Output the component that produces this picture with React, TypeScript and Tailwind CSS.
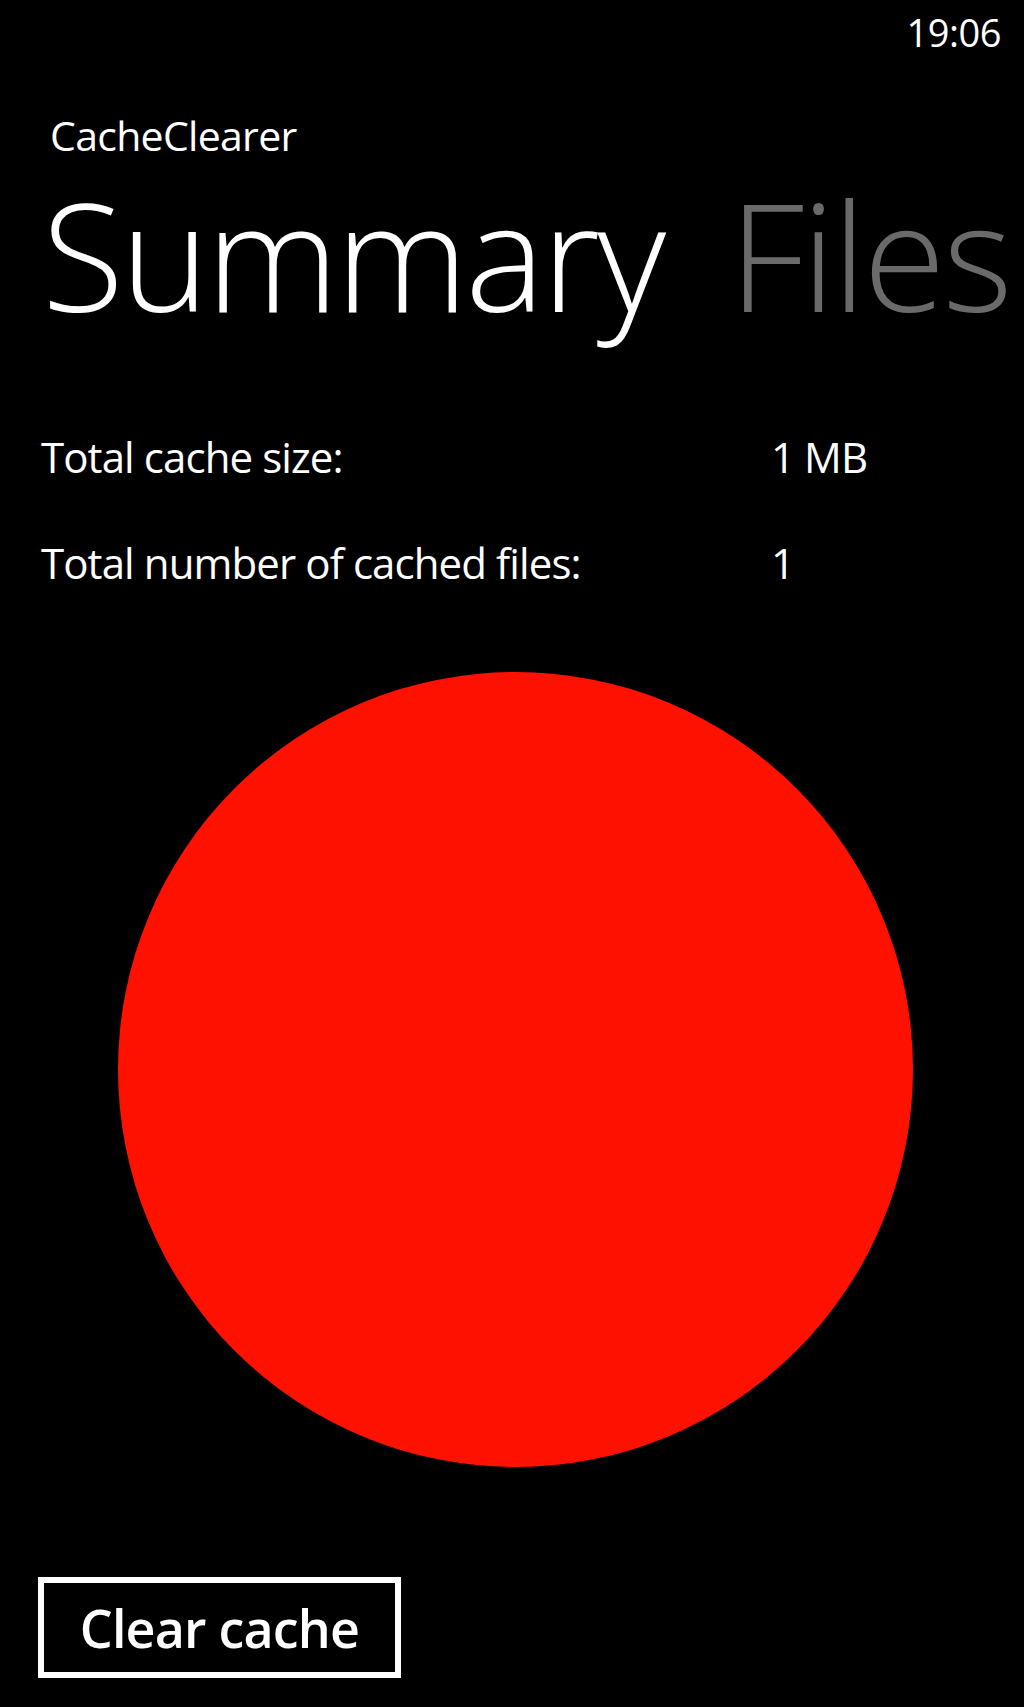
import React from "react";

export default function App() {
  return (
    <div
      className="w-[1024px] h-[1707px] bg-black text-white overflow-hidden flex flex-col"
      style={{ fontFamily: '"Open Sans", "Noto Sans", sans-serif' }}
    >
      {/* status bar */}
      <div className="flex justify-end pr-[23px] pt-[13px]">
        <span className="text-[38px] leading-none tracking-[-0.5px]">19:06</span>
      </div>

      {/* app title */}
      <div className="mt-[64px] pl-[50px] text-[41px] leading-none tracking-[-0.7px]">CacheClearer</div>

      {/* pivot headers */}
      <div className="mt-[23px] pl-[42px] flex gap-[66px] whitespace-nowrap text-[150px] leading-none font-light tracking-[-3px]">
        <span>Summary</span>
        <span className="text-[#6a6a6a]">Files</span>
      </div>

      {/* summary rows */}
      <div className="mt-[107px] grid grid-cols-[730px_1fr] pl-[41px] text-[42px] leading-none tracking-[-0.9px]">
        <span>Total cache size:</span>
        <span>1 MB</span>
      </div>
      <div className="mt-[64px] grid grid-cols-[730px_1fr] pl-[41px] text-[42px] leading-none tracking-[-0.9px]">
        <span>Total number of cached files:</span>
        <span>1</span>
      </div>

      {/* chart */}
      <div className="mt-[88px] pl-[118px]">
        <div className="w-[795px] h-[795px] rounded-full bg-[#ff1100]" />
      </div>

      {/* button */}
      <div className="mt-[110px] pl-[38px]">
        <button className="w-[363px] h-[101px] border-[6px] border-white flex items-center justify-center text-[52px] font-semibold leading-none tracking-[-0.8px]">
          Clear cache
        </button>
      </div>
    </div>
  );
}
